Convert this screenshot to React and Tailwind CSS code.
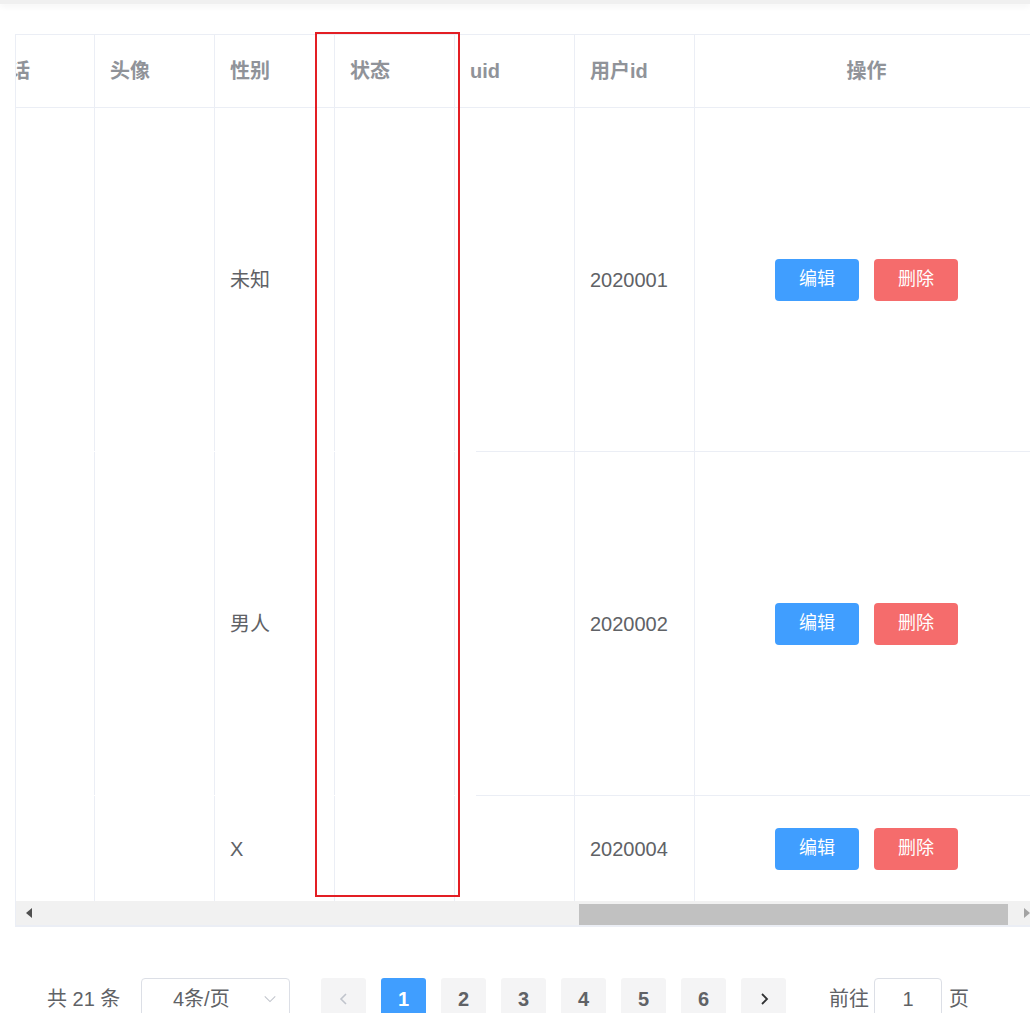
import React from 'react';

const font = { fontFamily: '"Liberation Sans", "Noto Sans CJK SC", sans-serif' };

const columns = ['电话', '头像', '性别', '状态', 'uid', '用户id'];

const rows = [
  { gender: '未知', userId: '2020001', height: 'h-[343px]' },
  { gender: '男人', userId: '2020002', height: 'h-[343px]' },
  { gender: 'X', userId: '2020004', height: 'h-[105px]' },
];

const gridCols = 'grid grid-cols-[120px_120px_120px_120px_120px_120px_345px]';

const Cell = ({ children, className = '' }) => (
  <div className={`flex items-center pl-[15px] pr-4 border-r border-[#ebeef5] ${className}`}>{children}</div>
);

const ChevronLeft = ({ className }) => (
  <svg className={className} viewBox="0 0 16 16" fill="none" stroke="currentColor" strokeWidth="1.6">
    <path d="M10 3 L5 8 L10 13" />
  </svg>
);

const ChevronRight = ({ className }) => (
  <svg className={className} viewBox="0 0 16 16" fill="none" stroke="currentColor" strokeWidth="1.8">
    <path d="M6 3 L11 8 L6 13" />
  </svg>
);

const ChevronDown = ({ className }) => (
  <svg className={className} viewBox="0 0 16 16" fill="none" stroke="currentColor" strokeWidth="1.2">
    <path d="M2 5 L8 11 L14 5" />
  </svg>
);

export default function App() {
  return (
    <div className="relative w-[1030px] h-[1013px] overflow-hidden bg-white" style={font}>
      {/* top header shadow */}
      <div className="h-[4px] bg-[#f0f0f0] shadow-[0_2px_6px_rgba(0,0,0,0.06)]" />

      {/* table */}
      <div className="ml-[15px] mt-[30px] border-l border-t border-b-2 border-[#ebeef5] overflow-hidden">
        <div className="-ml-[41px] w-[1065px]">
          {/* header */}
          <div className={`${gridCols} h-[73px] border-b border-[#ebeef5] text-[20px] font-bold text-[#909399]`}>
            {columns.map((c) => (
              <Cell key={c}>
                <span className="whitespace-nowrap">{c}</span>
              </Cell>
            ))}
            <Cell className="justify-center">操作</Cell>
          </div>

          {/* body */}
          <div className="h-[793px] overflow-hidden text-[20px] text-[#606266]">
            {rows.map((r, i) => (
              <div key={r.userId}>
                <div className={`${gridCols} ${r.height}`}>
                  <Cell />
                  <Cell />
                  <Cell>{r.gender}</Cell>
                  <Cell />
                  <Cell />
                  <Cell>{r.userId}</Cell>
                  <Cell className="justify-center gap-[15px]">
                    <button className="w-[84px] h-[42px] rounded-[4px] bg-[#409eff] text-white text-[18px]">编辑</button>
                    <button className="w-[84px] h-[42px] rounded-[4px] bg-[#f56c6c] text-white text-[18px]">删除</button>
                  </Cell>
                </div>
                {i < rows.length - 1 && <div className="ml-[501px] h-px bg-[#ebeef5]" />}
              </div>
            ))}
          </div>
        </div>

        {/* horizontal scrollbar */}
        <div className="flex h-[24px] bg-[#f1f1f1]">
          <div className="w-[17px] flex items-center justify-end pr-[1px]">
            <div className="w-0 h-0 border-y-[5px] border-y-transparent border-r-[6px] border-r-[#505050]" />
          </div>
          <div className="flex-1 pt-[3px]">
            <div className="ml-[546px] w-[429px] h-[21px] bg-[#c1c1c1]" />
          </div>
          <div className="w-[16px] flex items-center justify-end">
            <div className="w-0 h-0 border-y-[5px] border-y-transparent border-l-[6px] border-l-[#a3a3a3]" />
          </div>
        </div>
      </div>

      {/* pagination */}
      <div className="mt-[51px] pl-[47px] flex items-center h-[42px] text-[20px] text-[#606266]">
        <span className="w-[94px] whitespace-nowrap">共 21 条</span>
        <div className="w-[149px] h-[42px] border border-[#dcdfe6] rounded-[4px] flex items-center pl-[31px] pr-[12px] justify-between">
          <span>4条/页</span>
          <ChevronDown className="w-[14px] h-[14px] text-[#c0c4cc]" />
        </div>
        <div className="ml-[31px] flex gap-[15px]">
          <div className="w-[45px] h-[42px] rounded-[3px] bg-[#f4f4f5] flex items-center justify-center text-[#c0c4cc]">
            <ChevronLeft className="w-[16px] h-[16px]" />
          </div>
          {[1, 2, 3, 4, 5, 6].map((n) => (
            <div
              key={n}
              className={`w-[45px] h-[42px] rounded-[3px] flex items-center justify-center font-bold ${
                n === 1 ? 'bg-[#409eff] text-white' : 'bg-[#f4f4f5] text-[#606266]'
              }`}
            >
              {n}
            </div>
          ))}
          <div className="w-[45px] h-[42px] rounded-[3px] bg-[#f4f4f5] flex items-center justify-center text-[#303133]">
            <ChevronRight className="w-[16px] h-[16px]" />
          </div>
        </div>
        <span className="ml-[43px]">前往</span>
        <div className="ml-[5px] w-[68px] h-[42px] border border-[#dcdfe6] rounded-[4px] flex items-center justify-center">1</div>
        <span className="ml-[7px]">页</span>
      </div>

      {/* highlight overlay */}
      <div className="absolute left-[315px] top-[32px] w-[145px] h-[865px] border-2 border-[#e31e24] pointer-events-none" />
    </div>
  );
}
